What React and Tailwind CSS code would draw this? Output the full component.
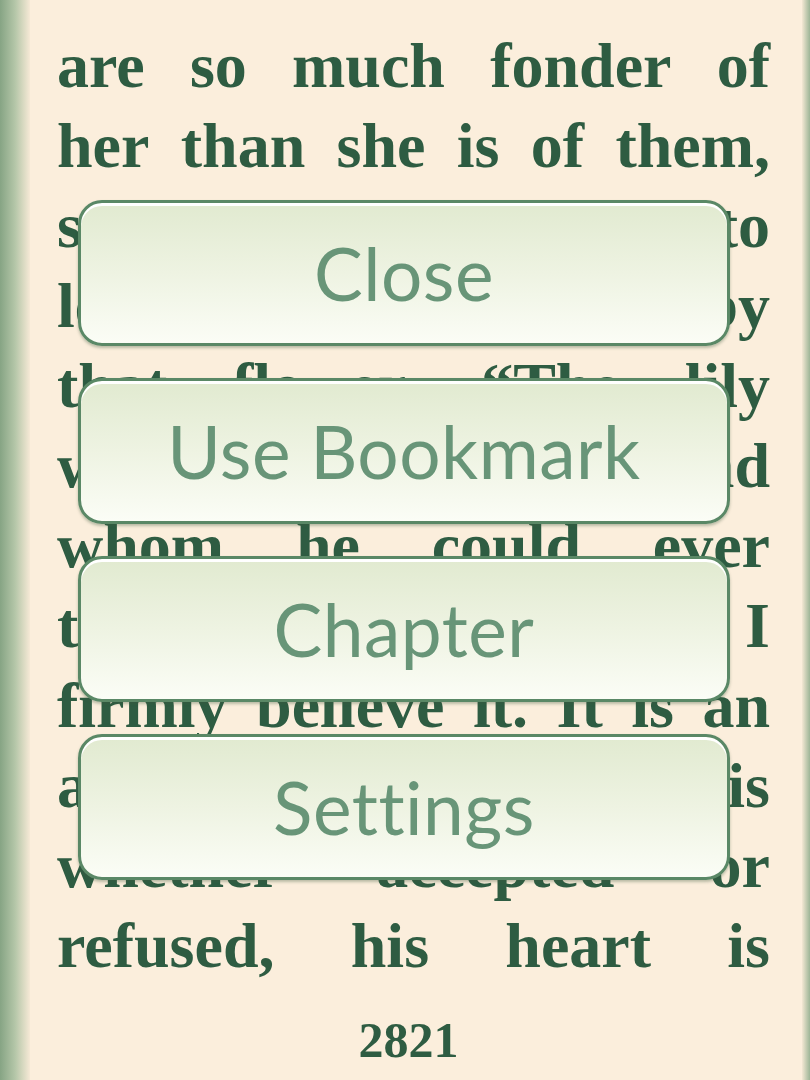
import React from "react";

const lines = [
  ["are", "so", "much", "fonder", "of"],
  ["her", "than", "she", "is", "of", "them,"],
  ["so", "it", "is", "not", "strange", "to"],
  ["learn", "that", "she", "is", "loved", "by"],
  ["that", "flower.", "\u201CThe", "lily"],
  ["was", "one", "whom", "he", "loved", "and"],
  ["whom", "he", "could", "ever"],
  ["think", "of", "loving,", "and", "I"],
  ["firmly", "believe", "it.", "It", "is", "an"],
  ["affection", "which", "is"],
  ["whether", "accepted", "or"],
  ["refused,", "his", "heart", "is"],
];

const menu = ["Close", "Use Bookmark", "Chapter", "Settings"];

function MenuButton({ label }) {
  return (
    <button className="relative h-[146px] w-full rounded-[24px] border-[3px] border-[#5a8866] bg-gradient-to-b from-[#e1ead0] via-[#eef3e2] to-[#fbfdf6] shadow-[inset_0_3px_0_#ffffff,0_2px_3px_rgba(60,90,60,0.35)]">
      <span className="text-[73px] leading-none text-[#689578] font-['Lato','Noto_Sans',sans-serif] tracking-[0.5px]">
        {label}
      </span>
    </button>
  );
}

export default function App() {
  return (
    <div className="relative flex h-[1080px] w-[810px] overflow-hidden bg-[#fbeedc]">
      {/* page edge on the left */}
      <div className="h-full w-[30px] shrink-0 bg-gradient-to-r from-[#86a484] via-[#b4c6a8] to-[#f6e9d6]" />

      <div className="flex flex-1 flex-col pt-[26px] pl-[27px] pr-[32px] font-['Liberation_Serif',serif] font-bold text-[#2e5c42]">
        {lines.map((words, i) => (
          <div key={i} className="flex h-[80px] justify-between text-[64px] leading-[80px]">
            {words.map((w, j) => (
              <span key={j}>{w}</span>
            ))}
          </div>
        ))}
        <div className="mt-[14px] pr-[10px] text-center text-[50px] leading-[80px]">2821</div>
      </div>

      {/* page edge on the right */}
      <div className="h-full w-[8px] shrink-0 bg-gradient-to-r from-[#f4e8d4] to-[#9db597]" />

      {/* reader menu */}
      <div className="absolute left-[78px] top-[200px] flex w-[652px] flex-col gap-[32px]">
        {menu.map((m) => (
          <MenuButton key={m} label={m} />
        ))}
      </div>
    </div>
  );
}
